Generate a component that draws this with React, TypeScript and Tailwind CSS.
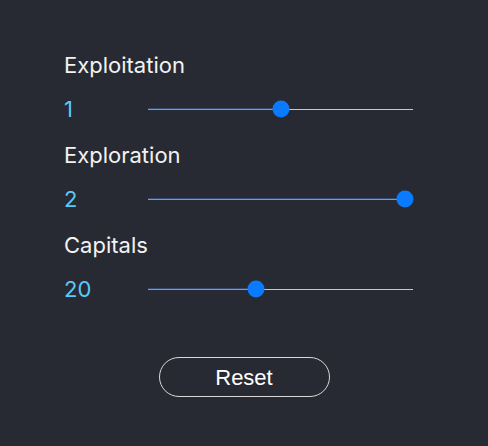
const sliders = [
  { label: "Exploitation", value: 1, pct: 50 },
  { label: "Exploration", value: 2, pct: 100 },
  { label: "Capitals", value: 20, pct: 40 },
];

function Slider({ pct }: { pct: number }) {
  return (
    <div className="relative h-6 w-[265px] flex items-center">
      <div className="h-px w-full bg-[#c9c9c9]" />
      <div
        className="absolute left-0 top-1/2 h-px -translate-y-1/2 bg-[#3a6db5]"
        style={{ width: `calc(8px + (100% - 16px) * ${pct / 100})` }}
      />
      <div
        className="absolute top-1/2 h-[17px] w-[17px] -translate-x-1/2 -translate-y-1/2 rounded-full bg-[#0a7aff]"
        style={{ left: `calc(8.5px + (100% - 17px) * ${pct / 100})` }}
      />
    </div>
  );
}

export default function App() {
  return (
    <div
      className="w-[488px] h-[446px] bg-[#282a33] text-white pl-16 pt-[53px]"
      style={{ fontFamily: "Inter, 'Noto Sans', sans-serif" }}
    >
      <div className="flex flex-col gap-[22px]">
        {sliders.map((s) => (
          <div key={s.label} className="flex flex-col gap-5">
            <div className="h-6 text-[22px] leading-6 text-[#f2f2f2]">{s.label}</div>
            <div className="flex items-center h-6">
              <div className="w-[84px] text-[22px] leading-6 text-[#5ac8fa]">{s.value}</div>
              <Slider pct={s.pct} />
            </div>
          </div>
        ))}
      </div>
      <div className="-ml-16 mt-14 flex justify-center">
        <button
          className="h-10 w-[171px] rounded-full border border-[#d8d8d8] text-[22px] text-white"
          style={{ fontFamily: "'Liberation Sans', Arial, sans-serif" }}
        >
          Reset
        </button>
      </div>
    </div>
  );
}
